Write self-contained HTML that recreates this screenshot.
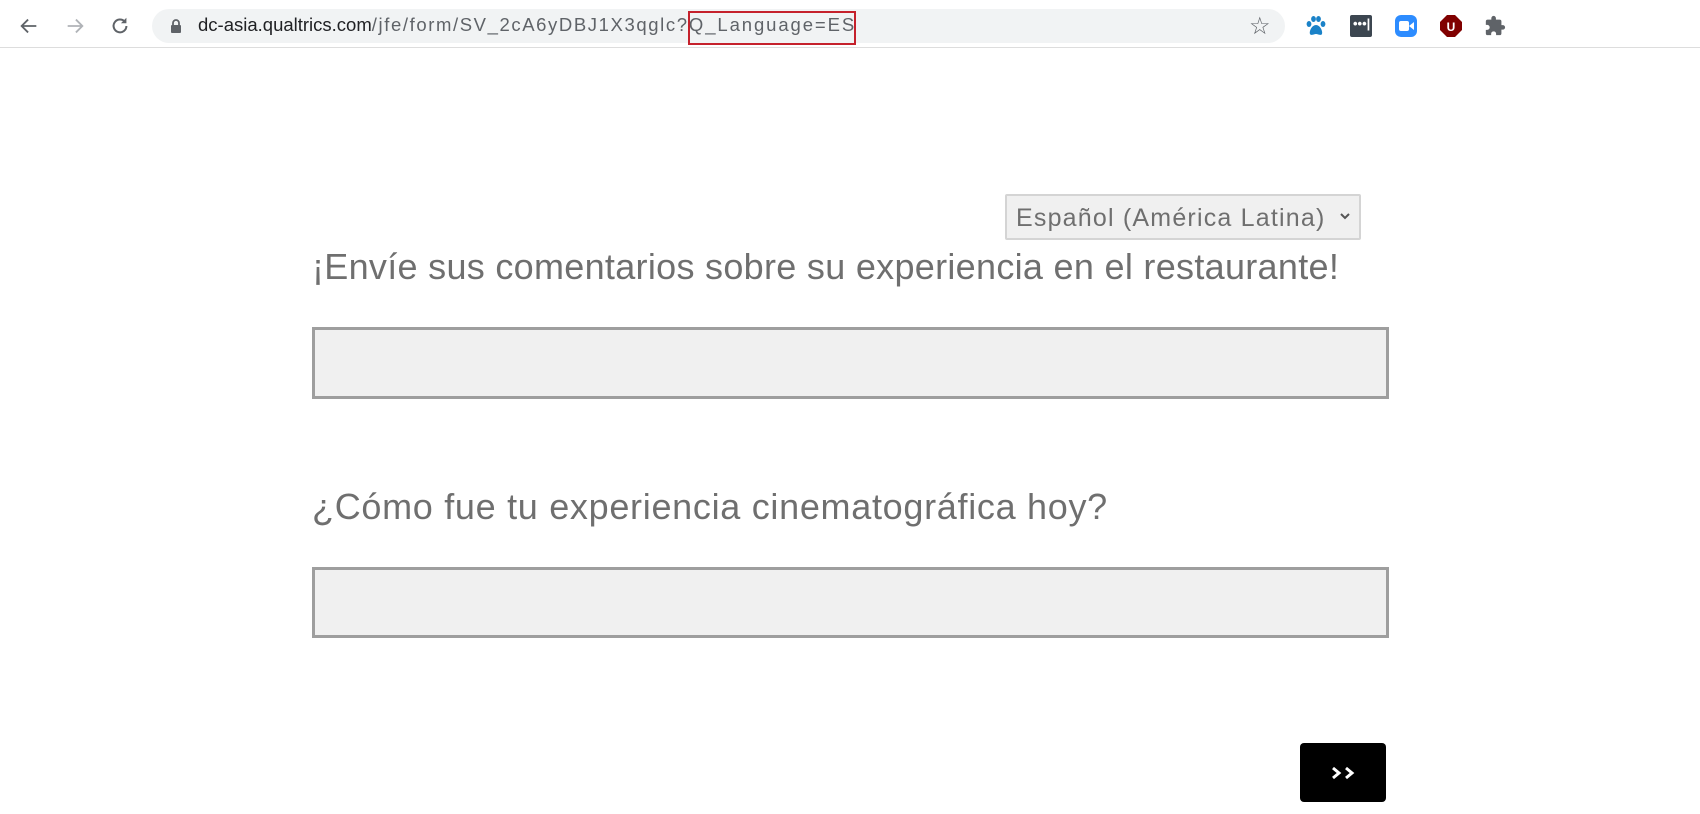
<!DOCTYPE html>
<html><head><meta charset="utf-8"><style>
body{margin:0;width:1700px;height:814px;background:#fff;font-family:"Liberation Sans",sans-serif;position:relative;overflow:hidden}
.a{position:absolute}
.bar{left:0;top:0;width:1700px;height:47px;background:#fff;border-bottom:1px solid #ddd}
.pill{left:152px;top:9px;width:1133px;height:34px;border-radius:17px;background:#f1f3f4}
.url{left:198px;top:14px;font-size:18.5px;color:#202124;white-space:nowrap}
.url span{color:#5f6368;letter-spacing:1.6px}
.url b{font-weight:normal;letter-spacing:1.9px}
.red{left:688px;top:11px;width:164px;height:30px;border:2.5px solid #c5212c}
.q{color:#6f6f6f;font-size:36px;white-space:nowrap;letter-spacing:0.3px}
.in{background:#f0f0f0;border:3px solid #9e9e9e;box-sizing:border-box}
</style></head><body>
<div class="a bar"></div>
<svg class="a" style="left:18px;top:15px" width="22" height="22" viewBox="0 0 24 24"><path d="M20 12H5M11 5l-7 7 7 7" stroke="#5f6368" stroke-width="2" fill="none"/></svg>
<svg class="a" style="left:64px;top:15px" width="22" height="22" viewBox="0 0 24 24"><path d="M4 12h15M13 5l7 7-7 7" stroke="#b0b3b7" stroke-width="2" fill="none"/></svg>
<svg class="a" style="left:109px;top:15px" width="22" height="22" viewBox="0 0 24 24"><path d="M19 12a7 7 0 1 1-2-5" stroke="#5f6368" stroke-width="2.2" fill="none"/><path d="M19 3v6h-6z" fill="#5f6368"/></svg>
<div class="a pill"></div>
<svg class="a" style="left:170px;top:18px" width="12" height="16" viewBox="0 0 12 16"><rect x="1" y="7" width="10" height="8" rx="1" fill="#5f6368"/><path d="M3 7V5a3 3 0 0 1 6 0v2" stroke="#5f6368" stroke-width="1.8" fill="none"/></svg>
<div class="a url">dc-asia.qualtrics.com<span>/jfe/form/SV_2cA6yDBJ1X3qglc<b>?Q_Language=ES</b></span></div>
<div class="a red"></div>
<div class="a" style="left:1249px;top:12px;font-size:24px;color:#5f6368">☆</div>
<svg class="a" style="left:1304px;top:14px" width="24" height="24" viewBox="0 0 24 24" fill="#1a82c8"><ellipse cx="5" cy="10" rx="2.4" ry="3"/><ellipse cx="9.5" cy="5" rx="2.4" ry="3"/><ellipse cx="14.5" cy="5" rx="2.4" ry="3"/><ellipse cx="19" cy="10" rx="2.4" ry="3"/><path d="M12 11c-4 0-7 6-6 9 1 2 4 0 6 0s5 2 6 0c1-3-2-9-6-9z"/></svg>
<div class="a" style="left:1350px;top:15px;width:22px;height:22px;background:#3c4650;border-radius:2px"></div>
<div class="a" style="left:1353px;top:16px;color:#fff;font-size:13px;font-weight:bold">•••|</div>
<div class="a" style="left:1395px;top:15px;width:22px;height:22px;background:#2d8cff;border-radius:6px"></div>
<svg class="a" style="left:1399px;top:21px" width="15" height="10" viewBox="0 0 15 10" fill="#fff"><rect width="10" height="10" rx="2"/><path d="M10 5l5-4v8z"/></svg>
<svg class="a" style="left:1440px;top:15px" width="22" height="22" viewBox="0 0 22 22"><path d="M7 0h8l7 7v8l-7 7H7l-7-7V7z" fill="#800000"/><text x="11" y="16" font-size="12" font-weight="bold" fill="#fff" text-anchor="middle" font-family="Liberation Sans">U</text></svg>
<svg class="a" style="left:1484px;top:15px" width="22" height="22" viewBox="0 0 24 24" fill="#5f6368"><path d="M20.5 11H19V7a2 2 0 0 0-2-2h-4V3.5a2.5 2.5 0 0 0-5 0V5H4a2 2 0 0 0-2 2v3.8h1.5a2.7 2.7 0 0 1 0 5.4H2V20a2 2 0 0 0 2 2h3.8v-1.5a2.7 2.7 0 0 1 5.4 0V22H17a2 2 0 0 0 2-2v-4h1.5a2.5 2.5 0 0 0 0-5z"/></svg>

<div class="a" style="left:1005px;top:194px;width:356px;height:46px;box-sizing:border-box;border:2px solid #d4d4d4;background:#f0f0f0;border-radius:2px;font-size:25px;letter-spacing:1.2px;color:#6f6f6f;padding:8px 0 0 9px;white-space:nowrap">Español (América Latina)</div>
<svg class="a" style="left:1340px;top:212px" width="10" height="8" viewBox="0 0 10 8"><path d="M1 2l4 4 4-4" stroke="#555" stroke-width="2" fill="none"/></svg>
<div class="a q" style="left:312px;top:246px">¡Envíe sus comentarios sobre su experiencia en el restaurante!</div>
<div class="a in" style="left:312px;top:327px;width:1077px;height:72px"></div>
<div class="a q" style="left:312px;top:486px;letter-spacing:0.7px">¿Cómo fue tu experiencia cinematográfica hoy?</div>
<div class="a in" style="left:312px;top:567px;width:1077px;height:71px"></div>
<div class="a" style="left:1300px;top:743px;width:86px;height:59px;background:#000;border-radius:4px"></div>
<svg class="a" style="left:1331px;top:766px" width="26" height="14" viewBox="0 0 26 14"><path d="M2 2l6 5-6 5M15 2l6 5-6 5" stroke="#fff" stroke-width="3" fill="none"/></svg>
</body></html>
